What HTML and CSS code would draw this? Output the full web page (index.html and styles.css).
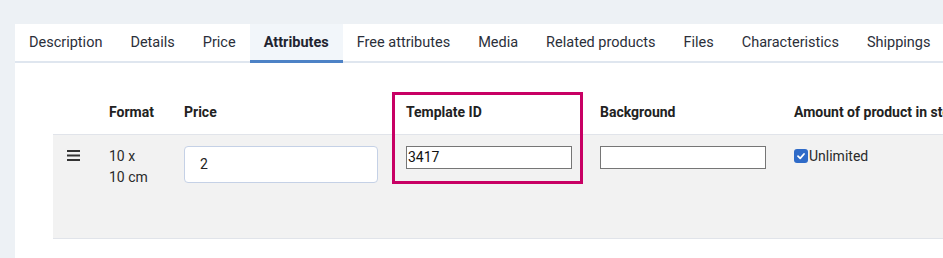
FILE: index.html
```
<!DOCTYPE html>
<html lang="en">

<head>
    <meta charset="UTF-8">
    <meta name="viewport" content="width=device-width, initial-scale=1.0">
    <title>Product attributes</title>
    <link rel="stylesheet" href="styles.css">
</head>

<body>
    <div class="panel">
        <ul class="tabs">
            <li>Description</li>
            <li>Details</li>
            <li>Price</li>
            <li class="active">Attributes</li>
            <li>Free attributes</li>
            <li>Media</li>
            <li>Related products</li>
            <li>Files</li>
            <li>Characteristics</li>
            <li>Shippings</li>
        </ul>

        <div class="content">
            <table class="attributes">
                <colgroup>
                    <col class="col-handle">
                    <col class="col-format">
                    <col class="col-price">
                    <col class="col-template">
                    <col class="col-background">
                    <col class="col-amount">
                </colgroup>
                <thead>
                    <tr>
                        <th></th>
                        <th>Format</th>
                        <th>Price</th>
                        <th>Template ID</th>
                        <th>Background</th>
                        <th>Amount of product in stock</th>
                    </tr>
                </thead>
                <tbody>
                    <tr>
                        <td>
                            <svg class="handle" width="14" height="12" viewBox="0 0 14 12">
                                <rect x="0" y="0" width="13" height="2" fill="#333"></rect>
                                <rect x="0" y="4.5" width="13" height="2" fill="#333"></rect>
                                <rect x="0" y="9" width="13" height="2" fill="#333"></rect>
                            </svg>
                        </td>
                        <td class="format">10 x<br>10 cm</td>
                        <td><input class="price-input" type="text" value="2"></td>
                        <td><input class="plain-input" type="text" value="3417"></td>
                        <td><input class="plain-input" type="text" value=""></td>
                        <td>
                            <label class="unlimited">
                                <span class="check">
                                    <svg width="10" height="10" viewBox="0 0 10 10">
                                        <path d="M2 5.2 L4.2 7.3 L8 3" fill="none" stroke="#fff" stroke-width="1.8"
                                            stroke-linecap="round" stroke-linejoin="round"></path>
                                    </svg>
                                </span>Unlimited
                            </label>
                        </td>
                    </tr>
                </tbody>
            </table>

            <!-- highlight around the template column -->
            <div class="highlight"></div>
        </div>
    </div>
</body>

</html>
```

FILE: styles.css
```
* {
    margin: 0px;
    padding: 0px;
    box-sizing: border-box;
}

html,
body {
    overflow: hidden;
}

body {
    background-color: #edf1f5;
    font-family: Roboto, "Liberation Sans", Arial, sans-serif;
    font-size: 14px;
    color: #222;
    width: 943px;
    height: 258px;
}

.panel {
    margin: 24px 0 0 15px;
    width: 1100px;
    height: 240px;
    background-color: #fff;
}

.tabs {
    display: flex;
    list-style: none;
    height: 39px;
    box-shadow: inset 0 -2px 0 #dfe6ef;
    white-space: nowrap;
}

.tabs li {
    flex-shrink: 0;
    padding: 0 14px;
    height: 39px;
    line-height: 37px;
    font-size: 14.5px;
    border-bottom: 3px solid transparent;
    color: #2b2f3a;
}

.tabs li.active {
    background-color: #f2f6fa;
    border-bottom-color: #4d82c6;
    font-weight: bold;
    color: #1f2430;
}

.content {
    position: relative;
    padding: 25px 0 0 38px;
}

.attributes {
    table-layout: fixed;
    border-collapse: collapse;
    width: 1000px;
}

.col-handle {
    width: 44px;
}

.col-format {
    width: 75px;
}

.col-price {
    width: 222px;
}

.col-template {
    width: 194px;
}

.col-background {
    width: 194px;
}

.attributes th {
    height: 46px;
    text-align: left;
    vertical-align: middle;
    font-weight: bold;
    padding: 3px 0 0 12px;
    border-bottom: 1px solid #e1e4ea;
    white-space: nowrap;
    overflow: hidden;
}

.attributes td {
    height: 104px;
    vertical-align: top;
    padding: 11px 0 0 12px;
    background-color: #f2f2f2;
    border-bottom: 1px solid #e1e4ea;
    line-height: 21px;
}

.attributes td:first-child {
    padding-left: 14px;
}

.handle {
    display: block;
    margin-top: 4px;
}

.format {
    color: #2a2a2a;
}

.price-input {
    display: block;
    width: 194px;
    height: 37px;
    border: 1px solid #c5d1e6;
    border-radius: 4px;
    padding: 0 15px;
    font-family: inherit;
    font-size: 14px;
    color: #222;
    background-color: #fff;
}

.plain-input {
    display: block;
    width: 166px;
    height: 23px;
    border: 1px solid #767676;
    padding: 0 1px;
    font-family: inherit;
    font-size: 14px;
    color: #111;
    background-color: #fff;
}

.unlimited {
    display: flex;
    align-items: center;
    color: #2a2a2a;
}

.check {
    display: flex;
    justify-content: center;
    align-items: center;
    width: 14px;
    height: 14px;
    border-radius: 3px;
    background-color: #2f6bc8;
    margin-right: 1px;
}

.highlight {
    position: absolute;
    left: 377px;
    top: 29px;
    width: 191px;
    height: 92px;
    border: 3px solid #c80064;
    pointer-events: none;
}
```
